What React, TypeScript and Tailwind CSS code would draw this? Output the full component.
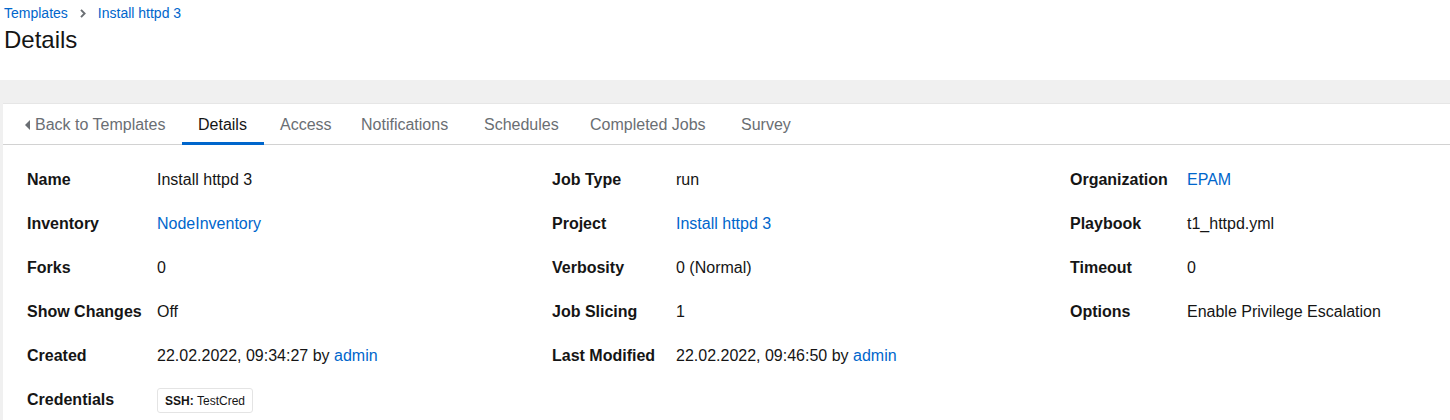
import React from "react";

const font = { fontFamily: '"Liberation Sans", Arial, sans-serif' };

function Link({ children }: { children: React.ReactNode }) {
  return <span className="text-[#0066cc]">{children}</span>;
}

type Cell = { label: string; value: React.ReactNode } | null;

const rows: Cell[][] = [
  [
    { label: "Name", value: "Install httpd 3" },
    { label: "Job Type", value: "run" },
    { label: "Organization", value: <Link>EPAM</Link> },
  ],
  [
    { label: "Inventory", value: <Link>NodeInventory</Link> },
    { label: "Project", value: <Link>Install httpd 3</Link> },
    { label: "Playbook", value: "t1_httpd.yml" },
  ],
  [
    { label: "Forks", value: "0" },
    { label: "Verbosity", value: "0 (Normal)" },
    { label: "Timeout", value: "0" },
  ],
  [
    { label: "Show Changes", value: "Off" },
    { label: "Job Slicing", value: "1" },
    { label: "Options", value: "Enable Privilege Escalation" },
  ],
  [
    {
      label: "Created",
      value: (
        <>
          22.02.2022, 09:34:27 by <Link>admin</Link>
        </>
      ),
    },
    {
      label: "Last Modified",
      value: (
        <>
          22.02.2022, 09:46:50 by <Link>admin</Link>
        </>
      ),
    },
    null,
  ],
  [
    {
      label: "Credentials",
      value: (
        <span className="inline-flex h-[25px] items-center rounded-[3px] border border-[#e4e4e4] px-[7px] align-middle text-[12px] leading-none text-[#151515]">
          <b className="font-bold">SSH:</b>
          <span>&nbsp;TestCred</span>
        </span>
      ),
    },
    null,
    null,
  ],
];

const tabs: { t: string; w: string }[] = [
  { t: "Details", w: "w-[82px]" },
  { t: "Access", w: "w-[81px]" },
  { t: "Notifications", w: "w-[123px]" },
  { t: "Schedules", w: "w-[106px]" },
  { t: "Completed Jobs", w: "w-[151px]" },
  { t: "Survey", w: "w-[81px]" },
];

export default function App() {
  return (
    <div style={font} className="min-h-[420px] bg-white text-[#151515]">
      <div className="h-[80px] px-[4px] pt-[4px]">
        <div className="flex items-center text-[14px] leading-[18px]">
          <span className="text-[#0066cc]">Templates</span>
          <svg className="mx-[12px]" width="6" height="9" viewBox="0 0 6 9">
            <path d="M1 0.8 L4.6 4.5 L1 8.2" stroke="#6a6e73" strokeWidth="1.9" fill="none" />
          </svg>
          <span className="text-[#0066cc]">Install httpd 3</span>
        </div>
        <h1 className="mt-[3px] text-[24px] leading-[30px] font-normal">Details</h1>
      </div>
      <div className="bg-[#f0f0f0] pt-[23px] pl-[3px]">
        <div className="bg-white border-t border-[#e6e6e6] min-h-[317px]">
          <div className="flex border-b border-[#d2d2d2] text-[16px]">
            <div className="relative flex h-[40px] w-[179px] items-center pt-[2px] pl-[22px] text-[#6a6e73]">
              <svg className="mr-[5px]" width="5" height="10" viewBox="0 0 5 10">
                <path d="M5 0 L0 5 L5 10 Z" fill="#6a6e73" />
              </svg>
              Back to Templates
            </div>
            {tabs.map((tab, i) => (
              <div
                key={tab.t}
                className={
                  "relative flex h-[40px] items-center pt-[2px] pl-[16px] whitespace-nowrap " +
                  tab.w +
                  " " +
                  (i === 0 ? "text-[#151515]" : "text-[#6a6e73]")
                }
              >
                {tab.t}
                {i === 0 && (
                  <span className="absolute left-0 right-0 bottom-[-1px] h-[3px] bg-[#0066cc]" />
                )}
              </div>
            ))}
          </div>
          <div className="grid grid-cols-[130px_395px_124px_394px_117px_1fr] gap-y-5 pl-[24px] pt-[23px] text-[16px] leading-[24px]">
            {rows.map((r, ri) =>
              r.map((c, ci) =>
                c ? (
                  <React.Fragment key={ri + "-" + ci}>
                    <div className="font-bold">{c.label}</div>
                    <div>{c.value}</div>
                  </React.Fragment>
                ) : (
                  <React.Fragment key={ri + "-" + ci}>
                    <div />
                    <div />
                  </React.Fragment>
                )
              )
            )}
          </div>
        </div>
      </div>
    </div>
  );
}
